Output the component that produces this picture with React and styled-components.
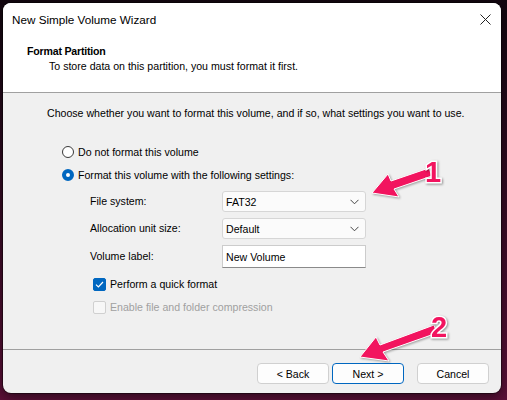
import React from "react"
import styled, { createGlobalStyle } from "styled-components"

const font = `"Segoe UI", "Liberation Sans", Arial, sans-serif`
const blue = "#0067c0"
const pink = "#f2145f"

const Global = createGlobalStyle`
  html, body { margin: 0; padding: 0; }
  body {
    width: 507px;
    height: 400px;
    overflow: hidden;
    background: linear-gradient(180deg, #12070f 0%, #2a0a1e 35%, #5c1038 100%);
    font-family: ${font};
  }
`

const Stage = styled.div`
  position: relative;
  width: 507px;
  height: 400px;
  padding: 3px 0 0 3px;
  box-sizing: border-box;
`

const Window = styled.div`
  width: 498px;
  height: 390px;
  border-radius: 8px;
  overflow: hidden;
  display: flex;
  flex-direction: column;
  background: #f0f0f0;
  box-shadow: 0 0 0 1px rgba(0, 0, 0, 0.4), 0 4px 12px rgba(0, 0, 0, 0.5);
  font-size: 10.6px;
  white-space: nowrap;
`

const TitleBar = styled.div`
  height: 32px;
  display: flex;
  align-items: center;
  justify-content: space-between;
  padding: 0 10px 0 9px;
  background: #fff;
  color: #000;
  font-size: 11.7px;
`

const Header = styled.div`
  height: 58px;
  background: #fff;
  border-bottom: 1px solid #a0a0a0;
  padding: 9px 0 0 24px;
  box-sizing: border-box;
`

const HeaderTitle = styled.div`
  font-weight: bold;
  line-height: 15px;
  letter-spacing: -0.2px;
`

const HeaderSub = styled.div`
  line-height: 15px;
  padding-left: 22px;
`

const Body = styled.div`
  flex: 1;
  padding: 13px 0 0 44px;
  color: #000;
  border-bottom: 1px solid #a0a0a0;
`

const Intro = styled.div`
  line-height: 15px;
  margin-bottom: 23px;
`

const Option = styled.label`
  display: flex;
  align-items: center;
  gap: 4px;
  height: 16px;
  margin: 0 0 7px 15px;
`

const Radio = styled.span`
  width: 12px;
  height: 12px;
  border-radius: 50%;
  box-sizing: border-box;
  border: ${(p) => (p.checked ? `4px solid ${blue}` : "1px solid #3a3a3a")};
  background: #fff;
  flex-shrink: 0;
`

const Settings = styled.div`
  display: grid;
  grid-template-columns: 132px 144px;
  row-gap: 6px;
  margin: 8px 0 0 43px;
  align-items: center;
`

const FieldLabel = styled.div`
  line-height: 15px;
`

const Combo = styled.div`
  height: 21px;
  box-sizing: border-box;
  border: 1px solid #d6d6d6;
  border-radius: 3px;
  background: #fbfbfb;
  display: flex;
  align-items: center;
  justify-content: space-between;
  padding: 0 6px 0 3px;
`

const TextBox = styled.div`
  height: 23px;
  box-sizing: border-box;
  border: 1px solid #cccccc;
  border-bottom-color: #8a8a8a;
  background: #fff;
  display: flex;
  align-items: center;
  padding: 0 3px;
`

const Checks = styled.div`
  margin: 8px 0 0 46px;
`

const Check = styled.label`
  display: flex;
  align-items: center;
  gap: 4px;
  height: 16px;
  margin-bottom: 7px;
  color: ${(p) => (p.disabled ? "#a0a0a0" : "#000")};
`

const Box = styled.span`
  width: 13px;
  height: 13px;
  box-sizing: border-box;
  border-radius: 2px;
  border: 1px solid ${(p) => (p.checked ? blue : "#d0d0d0")};
  background: ${(p) => (p.checked ? blue : "#f7f7f7")};
  display: flex;
  align-items: center;
  justify-content: center;
  flex-shrink: 0;
`

const Footer = styled.div`
  height: 43px;
  display: flex;
  align-items: flex-start;
  padding: 13px 0 0 254px;
  box-sizing: border-box;
  gap: 3px;
`

const Button = styled.button`
  width: 72px;
  height: 21px;
  box-sizing: border-box;
  margin-left: ${(p) => p.gapLeft || 0}px;
  border: 1px solid ${(p) => (p.primary ? blue : "#d0d0d0")};
  border-radius: 4px;
  background: #fdfdfd;
  font-family: ${font};
  font-size: 10.6px;
  color: #000;
  padding: 0;
`

const Annotation = styled.svg`
  position: absolute;
  left: 0;
  top: 0;
  pointer-events: none;
`

const Chevron = () => (
  <svg width="9" height="6" viewBox="0 0 9 6">
    <path d="M0.5 0.8 L4.5 4.8 L8.5 0.8" fill="none" stroke="#444" strokeWidth="1" />
  </svg>
)

const Arrow = ({ d }) => (
  <path
    d={d}
    fill={pink}
    stroke="#fff"
    strokeWidth="1"
    strokeLinejoin="round"
    style={{ filter: "drop-shadow(1px 1px 1px rgba(0,0,0,0.35))" }}
  />
)

const Num = ({ x, y, children }) => (
  <text
    x={x}
    y={y}
    fontFamily="'Liberation Sans', Arial, sans-serif"
    fontWeight="bold"
    fontSize="29"
    fill={pink}
    stroke="#fff"
    strokeWidth="3"
    paintOrder="stroke"
    style={{ filter: "drop-shadow(1px 1px 1px rgba(0,0,0,0.4))" }}
  >
    {children}
  </text>
)

export default function App() {
  return (
    <>
      <Global />
      <Stage>
        <Window>
          <TitleBar>
            <span>New Simple Volume Wizard</span>
            <svg width="11" height="11" viewBox="0 0 11 11">
              <path d="M0.5 0.5 L10.5 10.5 M10.5 0.5 L0.5 10.5" stroke="#222" strokeWidth="1" />
            </svg>
          </TitleBar>
          <Header>
            <HeaderTitle>Format Partition</HeaderTitle>
            <HeaderSub>To store data on this partition, you must format it first.</HeaderSub>
          </Header>
          <Body>
            <Intro>Choose whether you want to format this volume, and if so, what settings you want to use.</Intro>
            <Option>
              <Radio />
              Do not format this volume
            </Option>
            <Option>
              <Radio checked />
              Format this volume with the following settings:
            </Option>
            <Settings>
              <FieldLabel>File system:</FieldLabel>
              <Combo>
                FAT32
                <Chevron />
              </Combo>
              <FieldLabel>Allocation unit size:</FieldLabel>
              <Combo>
                Default
                <Chevron />
              </Combo>
              <FieldLabel>Volume label:</FieldLabel>
              <TextBox>New Volume</TextBox>
            </Settings>
            <Checks>
              <Check>
                <Box checked>
                  <svg width="9" height="7" viewBox="0 0 9 7">
                    <path d="M1 3.6 L3.4 6 L8 1" fill="none" stroke="#fff" strokeWidth="1.2" />
                  </svg>
                </Box>
                Perform a quick format
              </Check>
              <Check disabled>
                <Box />
                Enable file and folder compression
              </Check>
            </Checks>
          </Body>
          <Footer>
            <Button>&lt; Back</Button>
            <Button primary>Next &gt;</Button>
            <Button gapLeft={10}>Cancel</Button>
          </Footer>
        </Window>
        <Annotation width="507" height="400" viewBox="0 0 507 400">
          <Arrow d="M372 193 L388 174 L391 181 L429 168 L432 176 L394 189 L399 197 Z" />
          <Num x="425" y="182">1</Num>
          <Arrow d="M360 357 L376 337 L380 345 L434 325 L437 333 L383 352 L389 361 Z" />
          <Num x="431" y="337">2</Num>
        </Annotation>
      </Stage>
    </>
  )
}
